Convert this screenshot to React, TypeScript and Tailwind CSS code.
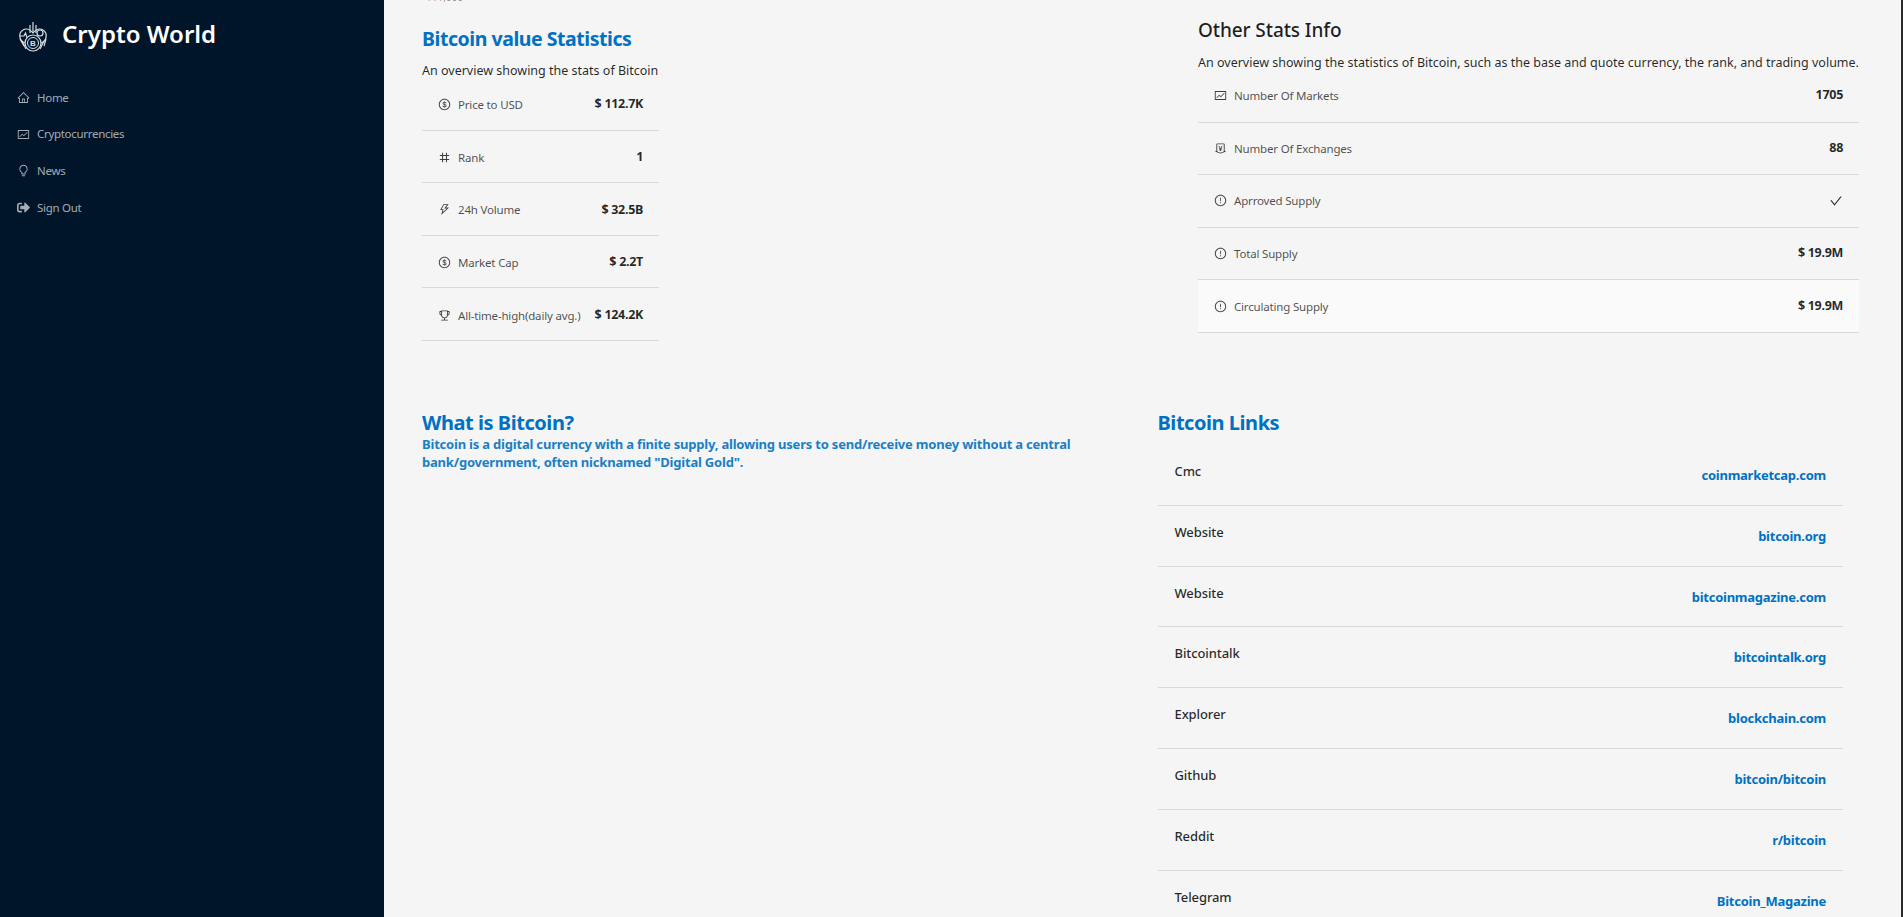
import React from 'react';
import { AiOutlineHome, AiOutlineFund, AiOutlineBulb, AiOutlineDollarCircle, AiOutlineNumber, AiOutlineThunderbolt, AiOutlineTrophy, AiOutlineMoneyCollect, AiOutlineExclamationCircle, AiOutlineCheck } from 'react-icons/ai';
import { FaSignOutAlt } from 'react-icons/fa';

function Logo() {
  return (
    <svg viewBox="0 0 32 32" className="w-[32px] h-[32px] shrink-0" fill="none" stroke="#d8dde2">
      <path d="M8 22C2 20 1 12 6 9c3-2 7-1 10 3 3-4 7-5 10-3 5 3 4 11-2 13" strokeWidth="1.2" />
      <path d="M3 15h4l1.5-3 2 6 1.5-3h3" strokeWidth="1.2" />
      <path d="M13 4v8M16 1v11M19 4v8" strokeWidth="1.2" />
      <path d="M3 18l4 7M5 20l4 8M27 25l2-7M23 28l4-8" strokeWidth="1.2" />
      <circle cx="16" cy="22" r="8" strokeWidth="1.2" fill="#001529" />
      <circle cx="16" cy="22" r="5.5" strokeWidth="1" />
      <circle cx="23" cy="12" r="3" strokeWidth="1.2" />
      <text x="16" y="25" textAnchor="middle" fontSize="8" fontWeight="700" fill="#d8dde2" stroke="none" fontFamily="Liberation Sans, sans-serif">B</text>
    </svg>
  );
}

const nav = [
  { icon: <AiOutlineHome />, label: 'Home' },
  { icon: <AiOutlineFund />, label: 'Cryptocurrencies' },
  { icon: <AiOutlineBulb />, label: 'News' },
  { icon: <FaSignOutAlt />, label: 'Sign Out' },
];

const stats = [
  { icon: <AiOutlineDollarCircle />, label: 'Price to USD', value: '$ 112.7K' },
  { icon: <AiOutlineNumber />, label: 'Rank', value: '1' },
  { icon: <AiOutlineThunderbolt />, label: '24h Volume', value: '$ 32.5B' },
  { icon: <AiOutlineDollarCircle />, label: 'Market Cap', value: '$ 2.2T' },
  { icon: <AiOutlineTrophy />, label: 'All-time-high(daily avg.)', value: '$ 124.2K' },
];

const other = [
  { icon: <AiOutlineFund />, label: 'Number Of Markets', value: '1705' },
  { icon: <AiOutlineMoneyCollect />, label: 'Number Of Exchanges', value: '88' },
  { icon: <AiOutlineExclamationCircle />, label: 'Aprroved Supply', value: <AiOutlineCheck className="text-[14px]" /> },
  { icon: <AiOutlineExclamationCircle />, label: 'Total Supply', value: '$ 19.9M' },
  { icon: <AiOutlineExclamationCircle />, label: 'Circulating Supply', value: '$ 19.9M', hover: true },
];

const links = [
  ['Cmc', 'coinmarketcap.com'],
  ['Website', 'bitcoin.org'],
  ['Website', 'bitcoinmagazine.com'],
  ['Bitcointalk', 'bitcointalk.org'],
  ['Explorer', 'blockchain.com'],
  ['Github', 'bitcoin/bitcoin'],
  ['Reddit', 'r/bitcoin'],
  ['Telegram', 'Bitcoin_Magazine'],
];

function StatRow({ row, low }: { row: any; low?: boolean }) {
  return (
    <div className={`flex items-center justify-between h-[52.6px] pl-[16px] pr-[16px] border-b border-[#d9d9d9] text-[#000000d9] ${low ? 'pt-[2px]' : ''} ${row.hover ? 'bg-[#fafafa]' : ''}`}>
      <div className="flex items-center gap-[7px] text-[#000000b3] text-[11.5px] tracking-[-0.18px]">
        <span className="text-[13px] text-[#000000bf]">{row.icon}</span>
        <span>{row.label}</span>
      </div>
      <span className="font-bold text-[12.5px] tracking-[-0.3px]">{row.value}</span>
    </div>
  );
}

export default function App() {
  return (
    <div className="flex h-[917px] overflow-hidden bg-[#f5f5f5] font-['Noto_Sans',sans-serif]">
      <aside className="w-[384px] shrink-0 bg-[#001529]">
        <div className="flex items-center gap-[13px] pl-[17px] pt-[21px]">
          <Logo />
          <span className="text-[24px] leading-[30px] font-semibold text-white -mt-[6px]">Crypto World</span>
        </div>
        <nav className="mt-[26px] flex flex-col">
          {nav.map((n) => (
            <div key={n.label} className="flex items-center gap-[7px] pl-[17px] h-[36.7px] text-[11.5px] tracking-[-0.3px] text-[#ffffffa6]">
              <span className="text-[13px]">{n.icon}</span>
              <span>{n.label}</span>
            </div>
          ))}
        </nav>
      </aside>
      <main className="flex-1 min-w-0 pl-[38px]">
        <div className="text-[10px] leading-[12px] text-[#00000073] pl-[4px] -mt-[9px]">111,000</div>
        <div className="flex">
          <section className="w-[776px] shrink-0 pt-[22px]">
            <h3 className="text-[19.5px] leading-[28px] font-bold text-[#0071c2] tracking-[-0.45px]">Bitcoin value Statistics</h3>
            <p className="mt-[9px] text-[12.5px] leading-[18px] text-[#000000d9]">An overview showing the stats of Bitcoin</p>
            <div className="w-[237px] -mt-[2px]">
              {stats.map((s) => (
                <StatRow key={s.label} row={s} low />
              ))}
            </div>
          </section>
          <section className="w-[661px] shrink-0 pt-[13px]">
            <h4 className="text-[19px] leading-[28px] font-medium text-[#000000e0] tracking-[-0.1px]">Other Stats Info</h4>
            <p className="mt-[10px] text-[12.5px] leading-[18px] text-[#000000d9] whitespace-nowrap">An overview showing the statistics of Bitcoin, such as the base and quote currency, the rank, and trading volume.</p>
            <div className="-mt-[2px]">
              {other.map((s) => (
                <StatRow key={s.label} row={s} />
              ))}
            </div>
          </section>
        </div>
        <div className="flex mt-[70px]">
          <section className="w-[735.5px] shrink-0">
            <h3 className="text-[20px] leading-[24px] font-bold text-[#0071c2] tracking-[-0.45px]">What is Bitcoin?</h3>
            <p className="text-[13px] leading-[18px] font-bold text-[#1a7fc4] tracking-[-0.2px] w-[690px]">Bitcoin is a digital currency with a finite supply, allowing users to send/receive money without a central bank/government, often nicknamed "Digital Gold".</p>
          </section>
          <section className="w-[685.5px] shrink-0">
            <h3 className="text-[20px] leading-[24px] font-bold text-[#0071c2] tracking-[-0.45px]">Bitcoin Links</h3>
            <div className="mt-[10px]">
              {links.map(([k, v], i) => (
                <div key={i} className="flex justify-between h-[60.8px] border-b border-[#d9d9d9] px-[17px]">
                  <span className="text-[13px] font-medium text-[#000000d9] mt-[17px] leading-[18px] tracking-[-0.1px]">{k}</span>
                  <span className="text-[13px] font-bold text-[#0071c2] mt-[21px] leading-[18px] tracking-[-0.25px]">{v}</span>
                </div>
              ))}
            </div>
          </section>
        </div>
      </main>
      <div className="w-[2px] shrink-0 bg-[#2b2b2b]" />
    </div>
  );
}
